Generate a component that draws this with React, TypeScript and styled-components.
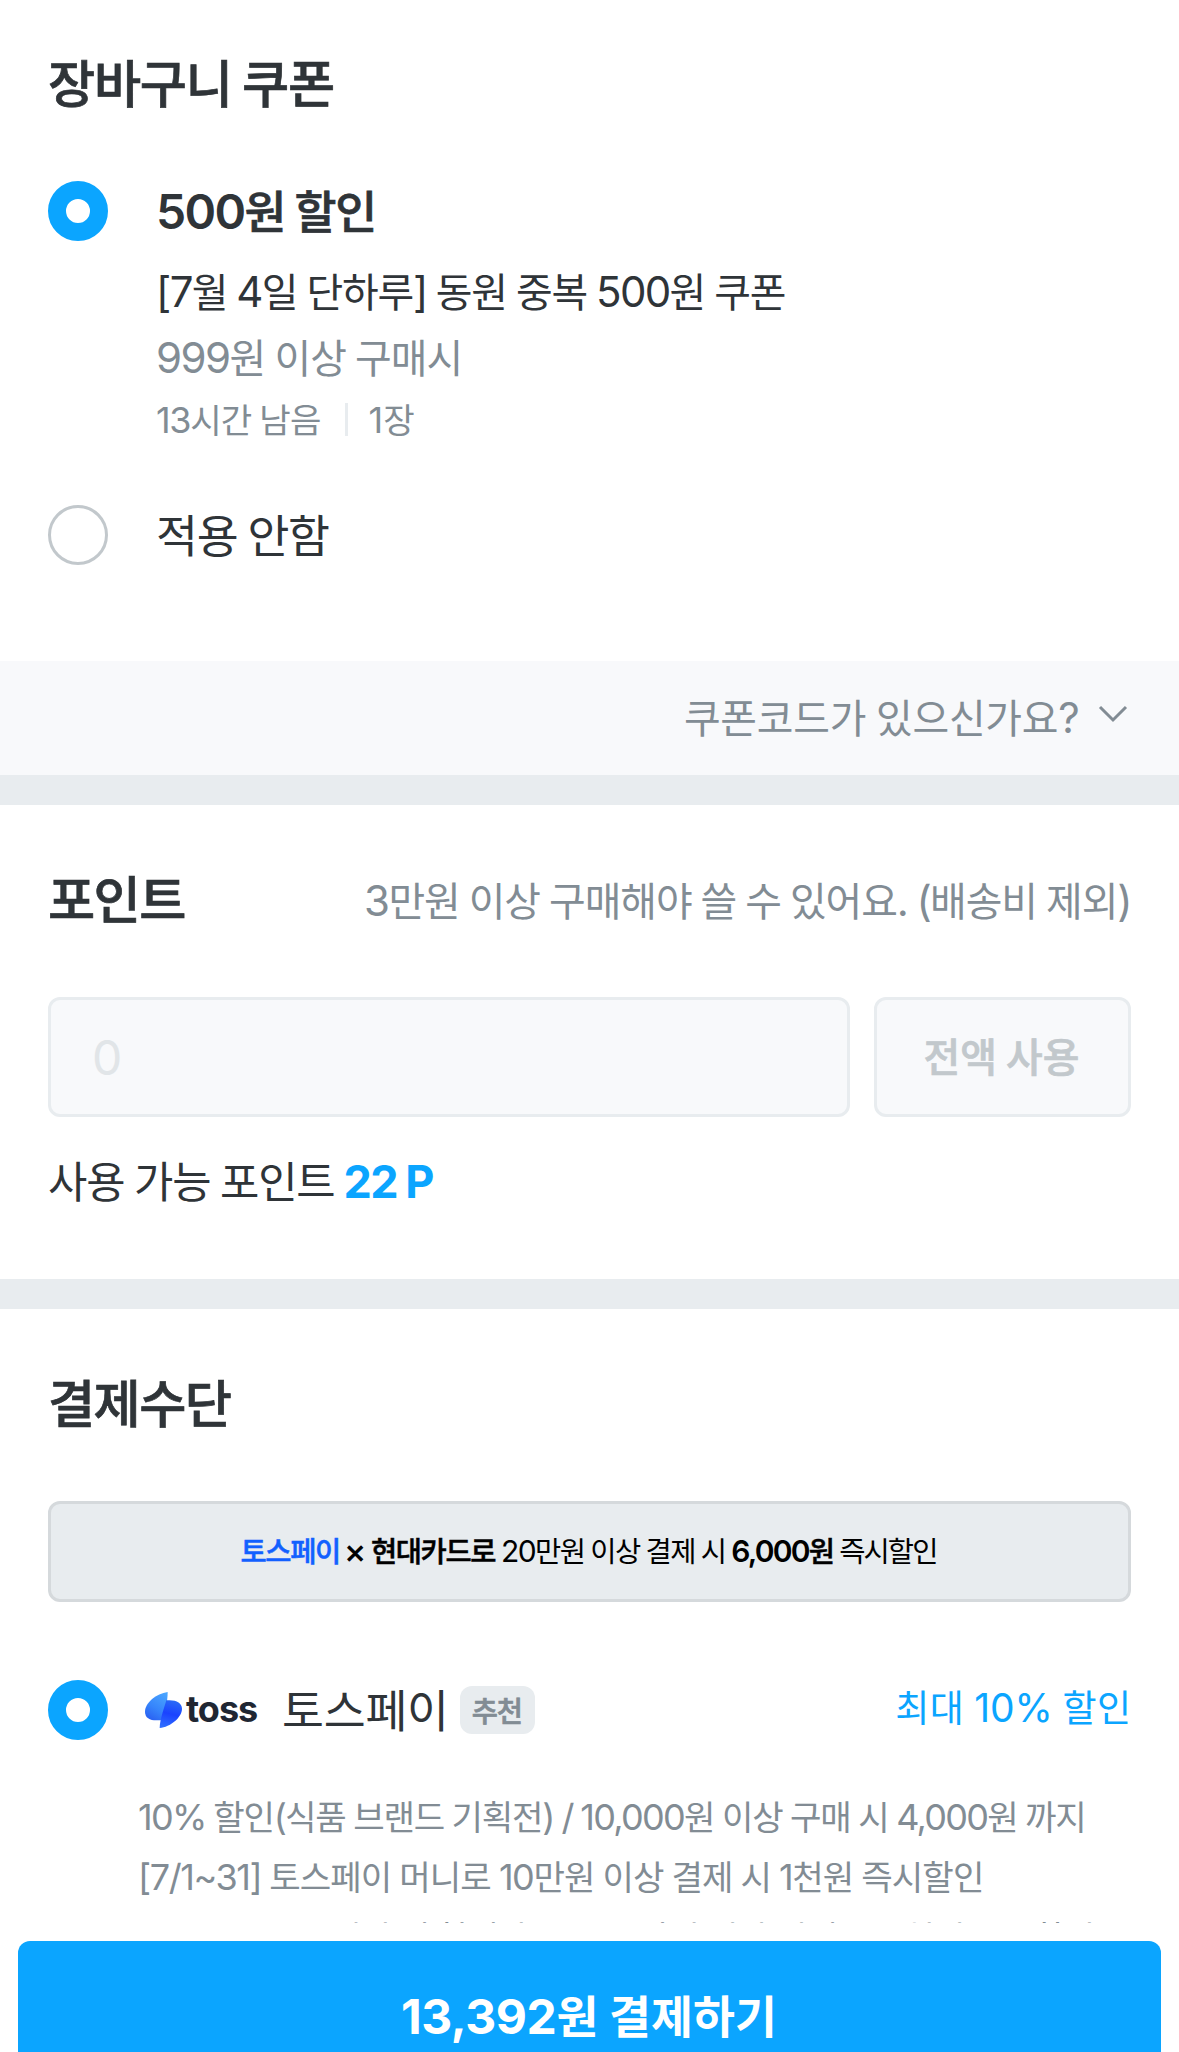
import React from "react";
import styled, { createGlobalStyle, css } from "styled-components";

const color = {
  ink: "#2f3438",
  sub: "#828c94",
  faint: "#c2c8cc",
  line: "#e8ecef",
  surface: "#f8f9fb",
  blue: "#0ba5ff",
  white: "#ffffff",
};

const hangul = `"Noto Sans CJK KR", sans-serif`;
const latin = `Inter, "Noto Sans CJK KR", sans-serif`;

const GlobalStyle = createGlobalStyle`
  *, *::before, *::after { box-sizing: border-box; }
  body { margin: 0; background: ${color.white}; }
`;

/* ---------- text ---------- */

type Weight = "regular" | "semibold" | "bold";

interface TextProps {
  $size: number;
  $line: number;
  $track?: number;
  $weight?: Weight;
  $color?: string;
}

const weights = {
  regular: css`
    font-weight: 400;
    word-spacing: 1.2px;
  `,
  semibold: css`
    font-weight: 500;
    -webkit-text-stroke: 0.7px currentColor;
  `,
  bold: css`
    font-weight: 700;
  `,
};

const Copy = styled.span<TextProps>`
  display: block;
  font-family: ${hangul};
  font-size: ${(p) => p.$size * 0.95}px;
  line-height: ${(p) => p.$line}px;
  letter-spacing: ${(p) => p.$track ?? 0}px;
  color: ${(p) => p.$color ?? color.ink};
  white-space: pre;
  ${(p) => weights[p.$weight ?? "regular"]}
`;

const Latin = styled.span<{ $weight: Weight; $track: number }>`
  font-family: ${latin};
  font-size: 1.0526em;
  line-height: 1;
  letter-spacing: ${(p) => p.$track - 0.5}px;
  -webkit-text-stroke: 0;
  ${(p) => p.$weight === "semibold" && "font-weight: 600;"}
`;

/* Digits and punctuation use the Latin face, a step larger than the Hangul around them. */
const mix = (text: string, weight: Weight = "regular", track = 0) =>
  text
    .split(/([!-~]+)/)
    .filter(Boolean)
    .map((run, i) =>
      /^[!-~]/.test(run) ? (
        <Latin key={i} $weight={weight} $track={track}>
          {run}
        </Latin>
      ) : (
        run
      )
    );

const Text = ({ children, ...rest }: TextProps & { children: string }) => (
  <Copy {...rest}>{mix(children, rest.$weight, rest.$track)}</Copy>
);

/* ---------- page ---------- */

const Page = styled.div`
  display: flex;
  flex-direction: column;
  height: 100vh;
  overflow: hidden;
`;

const Content = styled.main`
  flex: 1;
  min-height: 0;
  overflow: hidden;
`;

const Divider = styled.div`
  height: 30px;
  background: ${color.line};
`;

const CouponSection = styled.section`
  padding: 49px 48px 96px;
`;

const PointSection = styled.section`
  padding: 60px 48px 69px;
`;

const PaymentSection = styled.section`
  padding: 60px 48px 0;
`;

const SectionHeader = styled.header`
  display: flex;
  justify-content: space-between;
  align-items: flex-start;
`;

const HeaderNote = styled.div`
  padding-top: 2px;
`;

const Title = ({ children, track }: { children: string; track: number }) => (
  <Text $size={54} $line={63} $track={track} $weight="semibold">
    {children}
  </Text>
);

/* ---------- radio ---------- */

const Radio = styled.span<{ $checked?: boolean }>`
  flex: none;
  width: 60px;
  height: 60px;
  border-radius: 50%;
  background: ${color.white};
  border: ${(p) => (p.$checked ? `18px solid ${color.blue}` : `3px solid ${color.faint}`)};
`;

const OptionList = styled.div`
  display: flex;
  flex-direction: column;
  gap: 62px;
  margin-top: 69px;
`;

const Option = styled.div`
  display: flex;
  align-items: flex-start;
  gap: 48px;
`;

const OptionBody = styled.div`
  display: flex;
  flex-direction: column;
`;

const OptionDetails = styled.div`
  display: flex;
  flex-direction: column;
  margin-top: 20px;
`;

const Meta = styled.div`
  display: flex;
  align-items: center;
  margin-top: 5px;
`;

const MetaSeparator = styled.i`
  width: 3px;
  height: 33px;
  margin: 2px 21px 0 24px;
  background: ${color.line};
`;

/* ---------- coupon code ---------- */

const CodeToggle = styled.div`
  display: flex;
  justify-content: flex-end;
  align-items: flex-start;
  gap: 19px;
  height: 114px;
  padding: 24px 51px 0;
  background: ${color.surface};
`;

const Chevron = styled.svg`
  display: block;
  width: 30px;
  height: 18px;
  margin-top: 20px;
`;

/* ---------- points ---------- */

const PointForm = styled.div`
  display: flex;
  gap: 24px;
  height: 120px;
  margin-top: 67px;
`;

const PointInput = styled.input`
  flex: 1;
  min-width: 0;
  padding: 1px 41px 0;
  border: 3px solid ${color.line};
  border-radius: 12px;
  background: ${color.surface};
  font: 400 48px ${latin};

  &::placeholder {
    color: #e1e5e8;
    opacity: 1;
  }
`;

const UseAllButton = styled.button`
  display: flex;
  justify-content: center;
  align-items: center;
  width: 257px;
  padding: 0 2px 4px 0;
  border: 3px solid ${color.line};
  border-radius: 12px;
  background: ${color.surface};
`;

const Balance = styled.div`
  display: flex;
  margin-top: 32px;
`;

const BalanceValue = styled.div`
  margin-left: 9px;
`;

/* ---------- payment ---------- */

const Banner = styled.div`
  display: flex;
  justify-content: center;
  align-items: center;
  height: 101px;
  margin-top: 69px;
  padding: 0 2px 3px 0;
  border: 3px solid #d5d9dc;
  border-radius: 12px;
  background: ${color.line};
`;

const BannerStrong = styled.span<{ $brand?: boolean }>`
  font-weight: 500;
  letter-spacing: -1.4px;
  -webkit-text-stroke: 0.5px currentColor;
  ${(p) => p.$brand && "margin-right: -2px; color: #1260ff;"}
`;

const BannerCross = styled.span`
  font-size: 0.8em;
  font-weight: 700;
  line-height: 1;
  -webkit-text-stroke: 0.9px currentColor;
`;

const BannerTail = styled.span`
  letter-spacing: -1.9px;
`;

const Method = styled.div`
  display: flex;
  align-items: center;
  height: 60px;
  margin-top: 78px;
`;

const TossLogo = styled.div`
  display: flex;
  align-items: center;
  gap: 4px;
  width: 137px;
  margin-left: 37px;
`;

const TossMark = styled.svg`
  display: block;
  flex: none;
  width: 37px;
  height: 36px;
`;

const TossWord = styled.span`
  padding-bottom: 2px;
  font: 650 36px/36px Inter, sans-serif;
  letter-spacing: -1px;
  color: #202632;
`;

const MethodName = styled.div`
  padding-bottom: 5px;
`;

const Badge = styled.div`
  display: flex;
  justify-content: center;
  align-items: center;
  width: 75px;
  height: 48px;
  margin-left: 11px;
  padding-right: 1px;
  border-radius: 12px;
  background: ${color.line};
`;

const Offer = styled.div`
  margin: 0 -0.5px 8px auto;
`;

const Benefits = styled.div`
  display: grid;
  grid-template-rows: 60px 60px 60px;
  margin: 44.5px 0 0 90px;
`;

/* ---------- footer ---------- */

const Footer = styled.footer`
  flex: none;
  height: 129px;
  padding: 18px 18px 0;
  overflow: hidden;
  background: ${color.white};
`;

const PayButton = styled.button`
  display: flex;
  justify-content: center;
  align-items: center;
  width: 100%;
  height: 147px;
  padding: 0 1px 2px 0;
  border: 0;
  border-radius: 12px;
  background: ${color.blue};
`;

export default function App() {
  return (
    <Page>
      <GlobalStyle />
      <Content>
        <CouponSection>
          <Title track={-1.27}>장바구니 쿠폰</Title>
          <OptionList>
            <Option>
              <Radio $checked />
              <OptionBody>
                <Text $size={48} $line={56} $track={-1.15} $weight="semibold">
                  500원 할인
                </Text>
                <OptionDetails>
                  <Text $size={42} $line={66} $track={-1.14}>
                    [7월 4일 단하루] 동원 중복 500원 쿠폰
                  </Text>
                  <Text $size={42} $line={66} $track={-1} $color={color.sub}>
                    999원 이상 구매시
                  </Text>
                </OptionDetails>
                <Meta>
                  <Text $size={36} $line={49} $track={-0.86} $color={color.sub}>
                    13시간 남음
                  </Text>
                  <MetaSeparator />
                  <Text $size={36} $line={49} $track={0.6} $color={color.sub}>
                    1장
                  </Text>
                </Meta>
              </OptionBody>
            </Option>
            <Option>
              <Radio />
              <Text $size={48} $line={57} $track={-1.3}>
                적용 안함
              </Text>
            </Option>
          </OptionList>
        </CouponSection>

        <CodeToggle>
          <Text $size={42} $line={61} $track={-0.25} $color={color.sub}>
            쿠폰코드가 있으신가요?
          </Text>
          <Chevron viewBox="0 0 30 18" fill="none">
            <path d="M2 2 L15 15 L28 2" stroke={color.sub} strokeWidth="3" />
          </Chevron>
        </CodeToggle>
        <Divider />

        <PointSection>
          <SectionHeader>
            <Title track={-1.6}>포인트</Title>
            <HeaderNote>
              <Text $size={42} $line={63} $track={-1.08} $color={color.sub}>
                3만원 이상 구매해야 쓸 수 있어요. (배송비 제외)
              </Text>
            </HeaderNote>
          </SectionHeader>
          <PointForm>
            <PointInput placeholder="0" disabled />
            <UseAllButton disabled>
              <Text $size={42} $line={60} $weight="semibold" $color={color.faint}>
                전액 사용
              </Text>
            </UseAllButton>
          </PointForm>
          <Balance>
            <Text $size={45} $line={61} $track={-1.15}>
              사용 가능 포인트
            </Text>
            <BalanceValue>
              <Text $size={45} $line={61} $track={-1.2} $weight="bold" $color={color.blue}>
                22 P
              </Text>
            </BalanceValue>
          </Balance>
        </PointSection>
        <Divider />

        <PaymentSection>
          <Title track={-1.6}>결제수단</Title>
          <Banner>
            <Copy $size={30} $line={44} $track={-1.6} $color="#000000">
              <BannerStrong $brand>토스페이</BannerStrong> <BannerCross>×</BannerCross>{" "}
              <BannerStrong>현대카드로</BannerStrong>
              {mix(" 20만원 이상 결제 시 ", "regular", -1.1)}
              <BannerStrong>{mix("6,000원", "semibold", -1.3)}</BannerStrong>
              <BannerTail> 즉시할인</BannerTail>
            </Copy>
          </Banner>

          <Method>
            <Radio $checked />
            <TossLogo>
              <TossMark viewBox="0 0 111 108">
                <defs>
                  <linearGradient id="tossBack" x1="0.8" y1="0" x2="0.3" y2="1">
                    <stop offset="0" stopColor="#4aa5ff" />
                    <stop offset="0.6" stopColor="#3684fb" />
                    <stop offset="1" stopColor="#2a62f2" />
                  </linearGradient>
                  <linearGradient id="tossFront" x1="0.6" y1="0" x2="0.4" y2="1">
                    <stop offset="0" stopColor="#2a6bf6" />
                    <stop offset="0.5" stopColor="#1a43ff" />
                    <stop offset="1" stopColor="#2f6dff" />
                  </linearGradient>
                </defs>
                <path
                  d="M68 0C34 5 0 32 0 59C0 77 14 85 34 85H52C60 62 68 30 68 0Z"
                  fill="url(#tossBack)"
                />
                <path
                  d="M64 25C92 22 111 32 111 50C111 76 76 105 44 108C45 82 56 52 64 25Z"
                  fill="url(#tossFront)"
                />
              </TossMark>
              <TossWord>toss</TossWord>
            </TossLogo>
            <MethodName>
              <Text $size={48} $line={56} $track={-0.25}>
                토스페이
              </Text>
            </MethodName>
            <Badge>
              <Text $size={30} $line={48} $track={-1.2} $weight="semibold" $color={color.sub}>
                추천
              </Text>
            </Badge>
            <Offer>
              <Text $size={39} $line={52} $track={0.4} $color={color.blue}>
                최대 10% 할인
              </Text>
            </Offer>
          </Method>

          <Benefits>
            <Text $size={36} $line={60} $track={-1.21} $color={color.sub}>
              10% 할인(식품 브랜드 기획전) / 10,000원 이상 구매 시 4,000원 까지
            </Text>
            <Text $size={36} $line={60} $track={-0.91} $color={color.sub}>
              [7/1~31] 토스페이 머니로 10만원 이상 결제 시 1천원 즉시할인
            </Text>
            <Text $size={36} $line={62} $track={-1} $color={color.sub}>
              [7/1~31] 토스페이 내 현대카드로 20만원 이상 결제 시 6천원 즉시할인
            </Text>
          </Benefits>
        </PaymentSection>
      </Content>

      <Footer>
        <PayButton>
          <Text $size={48} $line={66} $track={0.1} $weight="bold" $color={color.white}>
            13,392원 결제하기
          </Text>
        </PayButton>
      </Footer>
    </Page>
  );
}
